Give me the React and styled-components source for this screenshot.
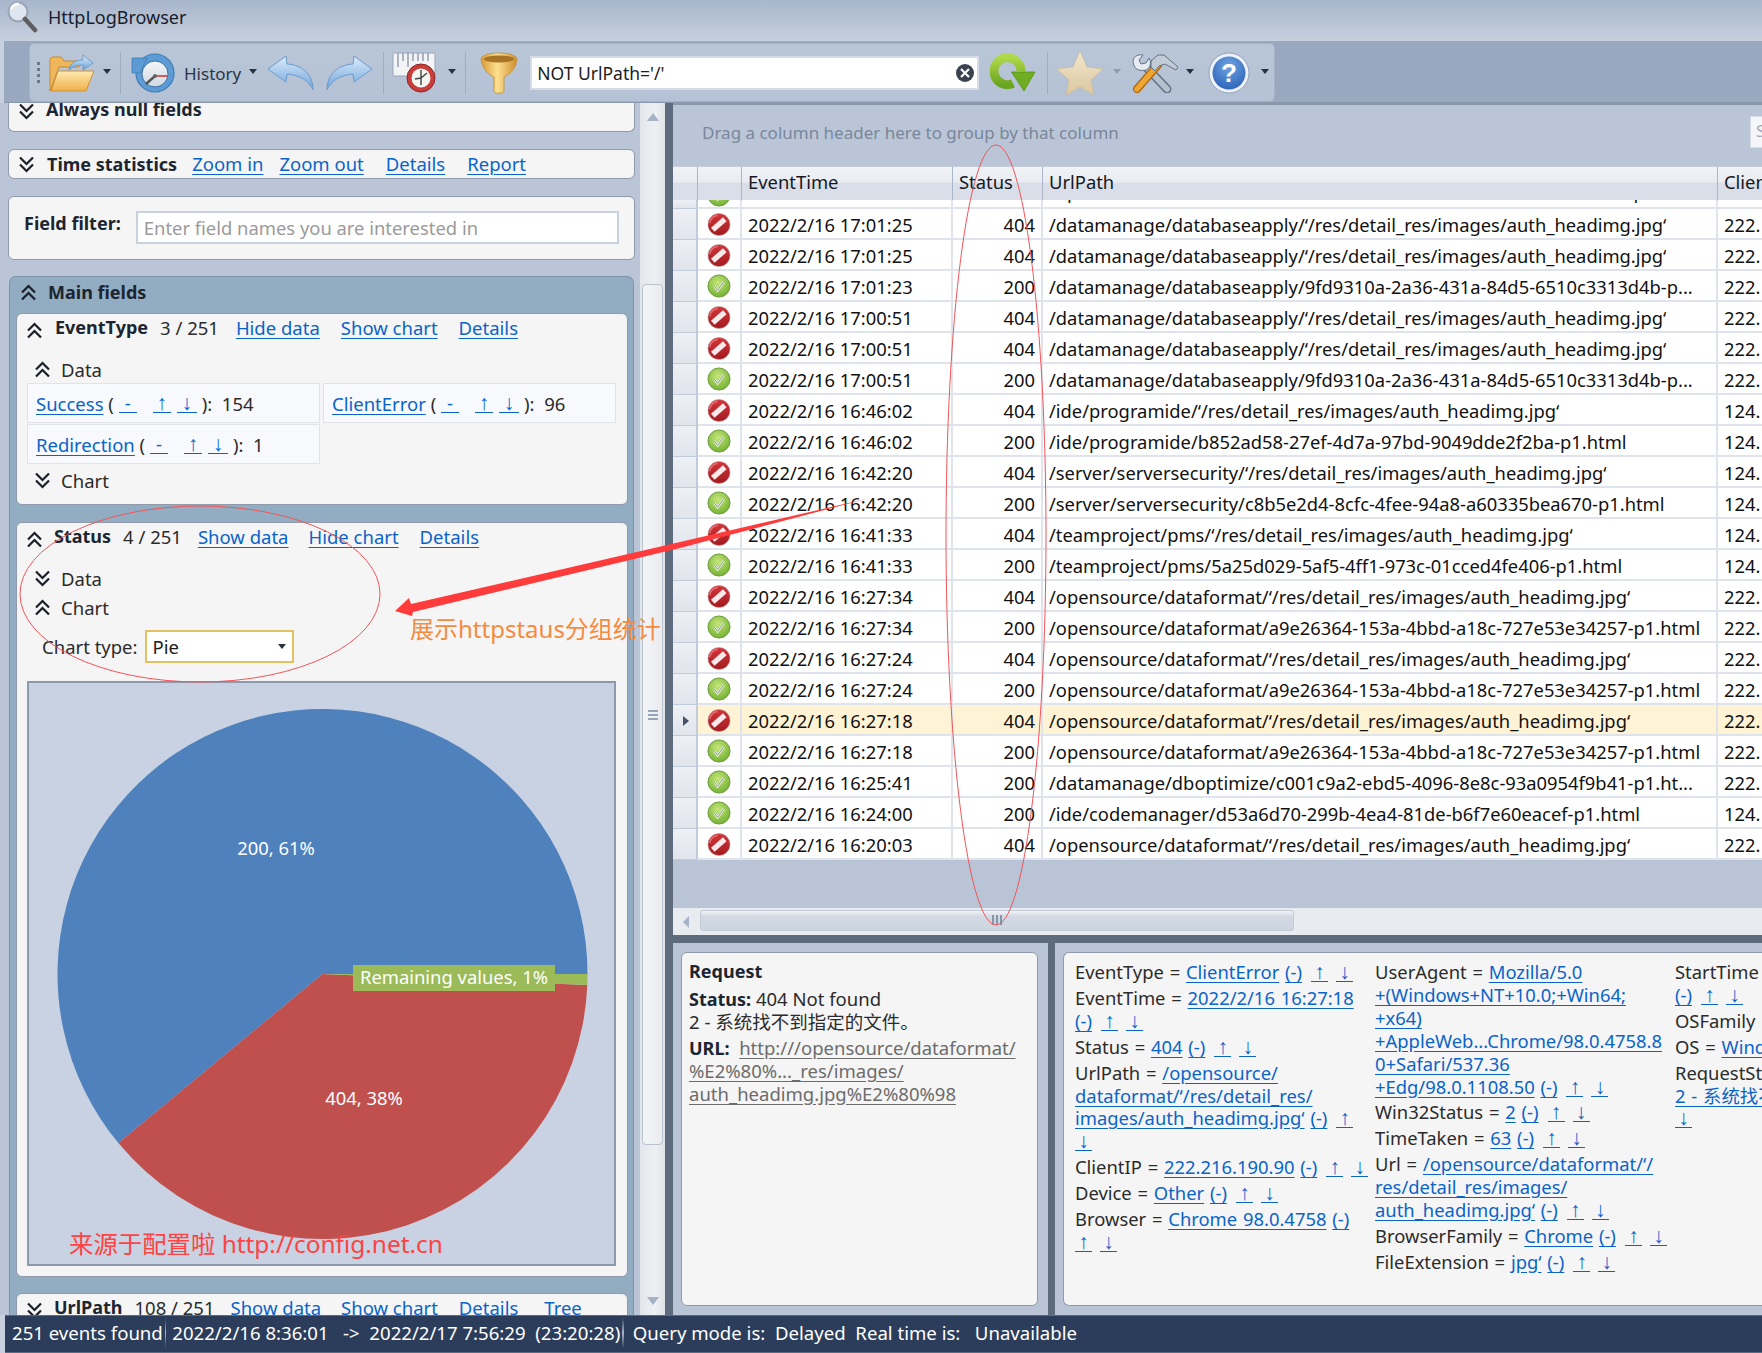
import React from "react";
import styled, { createGlobalStyle } from "styled-components";

const Global = createGlobalStyle`
  html, body { margin: 0; padding: 0; background: #c6d0de; }
  * { box-sizing: border-box; }
  body { font-family: "Noto Sans", "Noto Sans CJK SC", sans-serif; font-size: 18px; color: #1a1a1a; }
`;

const Page = styled.div`
  position: relative; width: 1762px; height: 1353px; overflow: hidden;
  display: flex; flex-direction: column; background: #c6d0de;
`;
const TitleBar = styled.div`
  height: 41px; flex: none; display: flex; align-items: center; padding: 0 0 7px 6px; gap: 10px;
  background: linear-gradient(#a8b6cc, #c6d0de); font-size: 18px; color: #16202c;
`;
const ToolStrip = styled.div`
  height: 62px; flex: none; margin-left: 4px; background: #9aa8bf; padding: 2px 0 1px 25px;
  border-bottom: 1px solid #8a98ae;
`;
const Toolbar = styled.div`
  width: 1246px; height: 59px; display: flex; align-items: center; position: relative;
  background: linear-gradient(#b9c6d8, #b5c2d5); border: 1px solid #a5b2c6; border-radius: 5px;
  color: #2c3542; font-size: 17px;
`;
const Grip = styled.div`
  width: 3px; height: 22px; margin-left: 7px; flex: none;
  background: repeating-linear-gradient(#6d7a8e 0 3px, transparent 3px 6px);
`;
const Sep = styled.div`
  width: 1px; height: 42px; flex: none; background: #9fadc1; margin-left: ${p => p.$ml}px;
`;
const Tool = styled.div`
  flex: none; display: flex; margin-left: ${p => p.$ml}px;
`;
const Caret = styled.div`
  flex: none; width: 0; height: 0; margin-left: ${p => p.$ml}px; margin-top: -3px;
  border-left: 4.5px solid transparent; border-right: 4.5px solid transparent;
  border-top: 5px solid ${p => p.$dim ? "#8f9db2" : "#26303e"};
`;
const HistoryLabel = styled.span` margin-left: ${p => p.$ml}px; flex: none; margin-top: 1px; `;
const FilterBox = styled.div`
  position: relative; flex: none; margin-left: 12px; width: 449px; height: 34px;
  background: #fff; border: 2px solid #d5dce6; display: flex; align-items: center;
`;
const FilterInput = styled.input`
  border: 0; outline: 0; background: transparent; width: 410px; padding: 0 0 0 5px;
  font: inherit; font-size: 17.5px; color: #1c1c1c;
`;
const ClearIcon = styled.svg` position: absolute; right: 2px; top: 5px; `;

const Main = styled.div` flex: 1; min-height: 0; display: flex; `;
const LeftPane = styled.div`
  width: 665px; flex: none; display: flex; overflow: hidden; background: #bac6d8;
`;
const LeftScroll = styled.div`
  width: 640px; flex: none; padding-left: 8px; display: flex; flex-direction: column; height: 1400px;
  font-size: 18.5px;
`;
const Card = styled.div`
  background: #f5f5f5; border: 1.5px solid #8f9aab; border-radius: 6px; flex: none;
`;
const NullCard = styled(Card)`
  width: 627px; height: 29px; border-top: 0; border-radius: 0 0 6px 6px;
  display: flex; align-items: flex-start; padding-left: 9px;
`;
const LinkCard = styled(Card)`
  width: 627px; height: 30px; margin-top: 17px; display: flex; align-items: center; padding-left: 9px;
  & > span { margin-top: -2px; }
`;
const FilterCard = styled(Card)`
  width: 627px; height: 64px; margin-top: 17px; display: flex; align-items: flex-start; padding: 14px 0 0 15px;
`;
const Strong = styled.b`
  font-weight: 700; font-size: 18px; color: #1c2530; margin-left: ${p => p.$ml || 0}px; white-space: pre;
`;
const NullTitle = styled(Strong)` margin-top: -6px; line-height: 24px; margin-left: 11px; `;
const PlainInput = styled.input`
  width: 483px; height: 33px; margin-left: 15px; margin-top: 0; border: 2px solid #c9d1dd; outline: 0;
  background: #fff; padding: 0 6px; font: inherit; font-size: 18.4px; color: #555;
  &::placeholder { color: #9a9a9a; opacity: 1; }
`;
const Section = styled.div`
  margin-top: 16px; margin-left: 1px; width: 625px; background: #92acc2; border: 1px solid #7f92a8; border-bottom: 0;
  border-radius: 7px 7px 0 0; padding: 0 6px; flex: none;
`;
const SectionHead = styled.div`
  height: 36px; display: flex; align-items: center; padding: 0 0 6px 4px; gap: 11px; color: #1c2a3a;
`;
const FieldCard = styled(Card)`
  height: ${p => p.$h}px; margin-bottom: ${p => p.$mb ?? 16}px; width: 612px; overflow: hidden;
`;
const FieldHead = styled.div`
  display: flex; align-items: center; height: 30px; margin-top: -2px; padding-left: 9px;
  white-space: pre;
`;
const HeadChev = styled.span` display: flex; margin-top: 7px; flex: none; `;
const Count = styled.span` margin-left: 12px; color: #2b2b2b; `;
const A = styled.span`
  color: #0a64c8; text-decoration: underline; text-underline-offset: 3px; white-space: pre;
  margin-left: ${p => p.$ml || 0}px;
`;
const Arr = styled.span`
  display: inline-block; width: ${p => p.$w || 17}px; margin-left: ${p => p.$ml || 0}px;
  border-bottom: 1px solid #0a64c8; color: #0a64c8; text-align: center; line-height: 19px;
  font-family: "Liberation Sans", sans-serif; font-size: 21px;
`;
const Dash = styled(Arr)` font-family: inherit; font-size: inherit; `;
const Tail = styled.span` margin-left: 5px; white-space: pre; `;
const Expander = styled.div`
  display: flex; align-items: center; gap: 10px; padding-left: 17px; height: 28px; color: #2b2b2b;
  margin-top: ${p => p.$mt || 0}px;
`;
const CellGrid = styled.div`
  display: grid; grid-template-columns: 293px 293px; gap: 1px 3px; margin: 0 0 0 10px;
`;
const Cell = styled.div`
  height: 40px; background: #f7f9fd; border: 1.5px solid #e1e3e8; display: flex; align-items: center;
  padding-left: 8px; white-space: pre; color: #2b2b2b;
`;
const TypeRow = styled.div`
  display: flex; align-items: center; padding-left: 25px; height: 33px; margin-top: 9px; color: #2b2b2b;
`;
const Select = styled.div`
  width: 149px; height: 33px; margin-left: 7px; background: #fff; border: 2px solid #e3c35f;
  display: flex; align-items: center; justify-content: space-between; padding: 0 6px 0 6px; color: #1c1c1c;
`;
const SelectCaret = styled(Caret)` margin: 0; `;
const ChartBox = styled.div`
  width: 589px; height: 585px; margin: 18px 0 0 10px; background: #c8d2e3; border: 2px solid #8d99ac;
  display: flex; align-items: center;
`;

const VBar = styled.div`
  width: 25px; flex: none; background: linear-gradient(90deg, #e3e6eb, #eef0f3 60%, #e0e3e8);
  display: flex; flex-direction: column; align-items: center;
`;
const Tri = styled.div`
  width: 0; height: 0; flex: none; margin-top: ${p => p.$mt || 0}px;
  border-left: 6px solid transparent; border-right: 6px solid transparent;
  ${p => p.$down ? "border-top: 8px solid #a5b3c7;" : "border-bottom: 8px solid #a5b3c7;"}
`;
const VThumb = styled.div`
  width: 21px; height: 861px; margin-top: 163px; flex: none; border: 1.5px solid #b9c2cf; border-radius: 4px;
  background: linear-gradient(90deg, #f4f5f7, #e9ebef); display: flex; align-items: center; justify-content: center;
`;
const VGrip = styled.div`
  width: 10px; height: 10px; background: repeating-linear-gradient(#97a5b9 0 2px, transparent 2px 4px);
`;
const Splitter = styled.div` width: 8px; flex: none; background: #5d6b7f; `;
const RightPane = styled.div` flex: 1; min-width: 0; display: flex; flex-direction: column; overflow: hidden; `;
const GroupPanel = styled.div`
  height: 63px; flex: none; background: #bac6d7; display: flex; align-items: center; padding: 0 0 7px 29px;
  color: #79879b; font-size: 17px; border-top: 2px solid #8a98ae;
`;
const Hint = styled.div`
  margin-left: auto; margin-right: -44px; width: 56px; height: 32px; flex: none; background: #f4f6f9;
  border: 1.5px solid #d6dde7; color: #a3a9b2; padding-left: 5px; line-height: 28px;
`;
const GridTable = styled.div`
  flex: none; display: grid; grid-template-columns: 25px 44px 211px 90px 675px 60px; background: #dfe3ec;
`;
const HeadCell = styled.div`
  height: 34px; background: linear-gradient(#f0f2f5, #e9ecf1 45%, #d9dee8 50%, #d9dee8);
  border-right: 1.5px solid #a9b5c8; border-top: 1px solid #c3ccd9; display: flex; align-items: center; padding: 0 0 5px 6px;
  font-size: 18.4px; color: #15191f; white-space: pre; overflow: hidden;
`;
const Row = styled.div` display: contents; `;
const CellBase = styled.div`
  height: ${p => p.$short ? 9 : 31}px; border-bottom: 2px solid #dfe3ec; border-right: 2px solid #dfe3ec;
  background: ${p => p.$sel ? "#fff3d6" : "#fff"}; display: flex;
  align-items: ${p => p.$short ? "flex-end" : "center"}; white-space: pre; overflow: hidden;
  font-size: 18.35px; color: #111; padding: ${p => p.$short ? "0 0 3px 6px" : "1px 0 0 6px"};
`;
const Indicator = styled(CellBase)`
  background: linear-gradient(#edf0f4, #e1e5ec); padding-left: 10px; border-right: 2px solid #c2cbd9;
  border-bottom: 1.5px solid #c2cbd9;
`;
const StatusCell = styled(CellBase)` justify-content: flex-end; padding-left: 0; padding-right: 6px; `;
const IconCell = styled(CellBase)` justify-content: center; padding: ${p => p.$short ? "0" : "1px 0 0"}; `;
const SelMark = styled.div`
  width: 0; height: 0; border-top: 5.5px solid transparent; border-bottom: 5.5px solid transparent;
  border-left: 6px solid #46526a;
`;
const GridEmpty = styled.div` flex: 1; background: #b9c5d6; `;
const HBar = styled.div`
  height: 27px; flex: none; background: #e8ebf0; display: flex; align-items: center; padding-left: 10px;
`;
const HTri = styled.div`
  width: 0; height: 0; border-top: 6px solid transparent; border-bottom: 6px solid transparent;
  border-right: 6px solid #a5b3c7;
`;
const HThumb = styled.div`
  width: 594px; height: 21px; margin-left: 11px; margin-top: -3px; border: 1.5px solid #c2cad6; border-radius: 3px;
  background: linear-gradient(#f1f3f6, #d2d9e3 30%, #cdd5e0); display: flex; align-items: center; justify-content: center;
`;
const HGrip = styled.div`
  width: 11px; height: 10px; background: repeating-linear-gradient(90deg, #8795aa 0 2px, transparent 2px 4px);
`;
const DarkBar = styled.div` height: 8px; flex: none; background: #5d6b7f; `;
const Bottom = styled.div`
  height: 372px; flex: none; background: #b9c5d6; display: flex; padding: 9px 0 9px 8px;
`;
const ReqCard = styled(Card)`
  width: 357px; padding: 7px 7px; line-height: 22.8px; color: #2b2b2b; font-size: 18.5px;
`;
const Line = styled.div` white-space: pre; margin-top: ${p => p.$mt || 0}px; `;
const GreyLink = styled.span` color: #6c6c6c; text-decoration: underline; text-underline-offset: 3px; `;
const BSplit = styled.div` width: 7px; flex: none; margin: -9px 8px -9px 10px; background: #5d6b7f; `;
const DetailCard = styled(Card)`
  width: 760px; display: flex; padding: 8px 0 0 11px; border-right: 0; border-radius: 6px 0 0 6px;
  line-height: 22.9px; font-size: 18.4px; color: #2b2b2b; word-spacing: 1px;
`;
const DetailCol = styled.div` width: 300px; flex: none; white-space: pre; `;
const Item = styled.div` margin-bottom: 3px; `;
const StatusBar = styled.div`
  height: 38px; flex: none; margin-left: 5px; padding: 0 0 3px 7px; display: flex; align-items: center;
  background: #2c3d5b; border-top: 1px solid #5a6a82; border-bottom: 1px solid #5a6a82;
  color: #fff; font-size: 18.6px; white-space: pre;
`;
const BarSep = styled.span`
  display: inline-block; width: 1.5px; height: 30px; margin: 0 ${p => p.$mr || 6}px 0 2px; flex: none;
  background: linear-gradient(transparent, #aab6c8 50%, transparent);
`;
const Overlay = styled.svg` position: absolute; left: 0; top: 0; pointer-events: none; `;
const NoteOrange = styled.div`
  position: absolute; left: 410px; top: 611px; font-size: 24px; line-height: 36px; color: #f58b40; white-space: pre;
`;
const NoteRed = styled.div`
  position: absolute; left: 69px; top: 1225px; font-size: 24.4px; line-height: 38px; color: #ff4242; white-space: pre;
`;
const Defs = styled.svg` position: absolute; width: 0; height: 0; `;

const Chev = ({ up, size = 17 }) => (
  <svg width={size} height={size} viewBox="0 0 17 17" fill="none" stroke="#1a1f28" strokeWidth="2.2" style={{ flex: "none" }}>
    {up ? <path d="M2 8.5 8.5 2 15 8.5M2 15.5 8.5 9 15 15.5" /> : <path d="M2 1.5 8.5 8 15 1.5M2 8.5 8.5 15 15 8.5" />}
  </svg>
);

const Ok = () => (
  <svg width="24" height="24" viewBox="0 0 25 25" style={{ flex: "none" }}>
    <circle cx="12.5" cy="12.5" r="11.5" fill="url(#gOk)" stroke="#6a9a3a" strokeWidth="1" />
    <path d="M7.5 12.5l3.5 4.5 6.5-9" fill="none" stroke="#e7efe0" strokeWidth="2.6" />
    <path d="M7.5 12.5l3.5 4.5 6.5-9" fill="none" stroke="#7f9a77" strokeWidth="1" />
  </svg>
);
const Bad = () => (
  <svg width="24" height="25" viewBox="0 0 25 25" style={{ flex: "none" }}>
    <circle cx="12.5" cy="12.5" r="11.5" fill="url(#gBad)" stroke="#b8a5a5" strokeWidth=".6" />
    <path d="M6 18 18.5 7" stroke="#f7e9e9" strokeWidth="5.6" />
    <path d="M3 11A9.5 9.5 0 0 1 11 3" stroke="#e9686c" strokeWidth="1.6" fill="none" />
  </svg>
);

const AppIcon = () => (
  <svg width="32" height="32" viewBox="0 0 32 32" style={{ flex: "none", marginTop: -1 }}>
    <circle cx="12" cy="11" r="9.5" fill="#dfe6ef" stroke="#9aa5b3" strokeWidth="2" />
    <path d="M5 8a8 8 0 0 1 8-5" stroke="#fff" strokeWidth="2.5" fill="none" />
    <path d="M19 18l10 11" stroke="#5f5f5f" strokeWidth="4.5" strokeLinecap="round" />
  </svg>
);
const Folder = () => (
  <svg width="46" height="38" viewBox="0 0 46 38">
    <path d="M1 37V5l2-2h9l3 4h13l2 6H10z" fill="#efb65a" stroke="#c58a34" strokeWidth="1" />
    <path d="M2 37 9 17h36l-8 20z" fill="url(#gFolder)" stroke="#cf9136" strokeWidth="1" />
    <path d="M20 16c1-7 6-10 14-10V1l10 8-10 7v-5c-5 0-10 1-14 5z" fill="url(#gArrow)" stroke="#5f90c4" strokeWidth=".8" />
  </svg>
);
const HistoryIcon = () => (
  <svg width="44" height="42" viewBox="0 0 44 42">
    <circle cx="24" cy="21" r="19" fill="#5c9bd3" stroke="#3f7db5" strokeWidth="1.2" />
    <circle cx="24" cy="22" r="13" fill="url(#gFace)" stroke="#3a6fa3" strokeWidth="1" />
    <path d="M24 24 36 24" stroke="#d23b3b" strokeWidth="1.6" />
    <path d="M24 24 15 32" stroke="#555" strokeWidth="2.4" />
    <circle cx="24" cy="24" r="2" fill="#666" />
    <path d="M1 6 16 6 9 21 1 21z" fill="#5c9bd3" stroke="#3f7db5" strokeWidth=".8" />
  </svg>
);
const ArrowL = ({ flip }) => (
  <svg width="47" height="36" viewBox="0 0 47 36" style={flip ? { transform: "scaleX(-1)" } : undefined}>
    <path d="M1 14 19 1l1 8c14 1 26 9 26 26-4-9-13-15-26-16l-1 8z" fill="url(#gArrow)" stroke="#6b9bcc" strokeWidth="1" />
  </svg>
);
const Timer = () => (
  <svg width="47" height="41" viewBox="0 0 47 41">
    <rect x="1" y="1" width="42" height="23" rx="1" fill="#f2f4f7" stroke="#9aa5b3" />
    <path d="M6 1v14M11 1v8M16 1v14M21 1v8M26 1v8M31 1v8M36 1v8" stroke="#8f9aa8" strokeWidth="1.4" />
    <circle cx="29" cy="26" r="14" fill="#c93d3d" stroke="#8f2424" />
    <circle cx="29" cy="26" r="9.5" fill="#f5f5f0" />
    <path d="M29 18v8l6-5M29 26v7M29 26l-6 1" stroke="#444" strokeWidth="1.4" fill="none" />
  </svg>
);
const Funnel = () => (
  <svg width="38" height="42" viewBox="0 0 38 42">
    <path d="M1 7c1-8 35-8 36 0-1 10-8 16-13 18v14c0 3-10 3-10 0V25C9 23 2 17 1 7z" fill="url(#gFunnel)" stroke="#c08f35" strokeWidth=".8" />
    <ellipse cx="19" cy="7" rx="15" ry="3.6" fill="#a87425" />
  </svg>
);
const Refresh = () => (
  <svg width="46" height="41" viewBox="0 0 46 41">
    <path d="M23 31.5A13.5 13.5 0 1 1 31 19" fill="none" stroke="url(#gGreen)" strokeWidth="9" />
    <path d="M21.5 20H45L34 39z" fill="#6fae22" stroke="#5b8f14" strokeWidth=".8" />
  </svg>
);
const Star = () => (
  <svg width="48" height="46" viewBox="0 0 48 46">
    <path d="M24 1l7 16 16 2-12 11 3 15-14-8-14 8 3-15L1 19l16-2z" fill="url(#gStar)" stroke="#cdbd99" strokeWidth=".8" />
  </svg>
);
const Tools = () => (
  <svg width="47" height="40" viewBox="0 0 47 40">
    <path d="M17 16 36 36" stroke="#5f7286" strokeWidth="9" strokeLinecap="round" />
    <path d="M17 16 36 36" stroke="#b5c1ce" strokeWidth="6" strokeLinecap="round" />
    <path d="M2 9C2 4 6 1 12 2L8 7l2 4 5-1 3-5c3 5 1 10-3 12-4 1-12 1-13-8z" fill="#e6ebf1" stroke="#5f7286" />
    <path d="M6 36 27 12" stroke="#a96a14" strokeWidth="8" strokeLinecap="round" />
    <path d="M6 36 27 12" stroke="#f0a533" strokeWidth="5.5" strokeLinecap="round" />
    <path d="M20 8l7-6h6l14 12-2 3-11-6-6 2-4 5-4-4z" fill="#c3ccd6" stroke="#5f7286" />
  </svg>
);
const Help = () => (
  <svg width="42" height="42" viewBox="0 0 42 42">
    <circle cx="21" cy="21" r="20" fill="#eef2f8" stroke="#8ea2bf" />
    <circle cx="21" cy="21" r="16.5" fill="url(#gHelp)" />
    <text x="21" y="30" textAnchor="middle" fontSize="26" fontWeight="700" fill="#fff" fontFamily="Liberation Sans">?</text>
  </svg>
);

const Pie = () => (
  <svg width="585" height="579" viewBox="0 0 585 579">
    <path d="M293.5 290H558.5A265 265 0 1 0 89.4 459Z" fill="#4f81bd" />
    <path d="M293.5 290 89.4 459A265 265 0 0 0 558.3 301Z" fill="#c0504d" />
    <path d="M293.5 290 558.3 301A265 265 0 0 0 558.5 290Z" fill="#9bbb59" />
    <rect x="324" y="281" width="202" height="26" fill="#9bbb59" />
    <g fill="#fff" fontSize="18.4" textAnchor="middle" fontFamily="Noto Sans, sans-serif">
      <text x="247" y="171">200, 61%</text>
      <text x="335" y="421">404, 38%</text>
      <text x="425" y="300">Remaining values, 1%</text>
    </g>
  </svg>
);

const deny = "‘/res/detail_res/images/auth_headimg.jpg‘";
const rows = [
  ["2022/2/16 17:01:25", 404, "/datamanage/databaseapply/" + deny, "222."],
  ["2022/2/16 17:01:25", 404, "/datamanage/databaseapply/" + deny, "222."],
  ["2022/2/16 17:01:23", 200, "/datamanage/databaseapply/9fd9310a-2a36-431a-84d5-6510c3313d4b-p...", "222."],
  ["2022/2/16 17:00:51", 404, "/datamanage/databaseapply/" + deny, "222."],
  ["2022/2/16 17:00:51", 404, "/datamanage/databaseapply/" + deny, "222."],
  ["2022/2/16 17:00:51", 200, "/datamanage/databaseapply/9fd9310a-2a36-431a-84d5-6510c3313d4b-p...", "222."],
  ["2022/2/16 16:46:02", 404, "/ide/programide/" + deny, "124."],
  ["2022/2/16 16:46:02", 200, "/ide/programide/b852ad58-27ef-4d7a-97bd-9049dde2f2ba-p1.html", "124."],
  ["2022/2/16 16:42:20", 404, "/server/serversecurity/" + deny, "124."],
  ["2022/2/16 16:42:20", 200, "/server/serversecurity/c8b5e2d4-8cfc-4fee-94a8-a60335bea670-p1.html", "124."],
  ["2022/2/16 16:41:33", 404, "/teamproject/pms/" + deny, "124."],
  ["2022/2/16 16:41:33", 200, "/teamproject/pms/5a25d029-5af5-4ff1-973c-01cced4fe406-p1.html", "124."],
  ["2022/2/16 16:27:34", 404, "/opensource/dataformat/" + deny, "222."],
  ["2022/2/16 16:27:34", 200, "/opensource/dataformat/a9e26364-153a-4bbd-a18c-727e53e34257-p1.html", "222."],
  ["2022/2/16 16:27:24", 404, "/opensource/dataformat/" + deny, "222."],
  ["2022/2/16 16:27:24", 200, "/opensource/dataformat/a9e26364-153a-4bbd-a18c-727e53e34257-p1.html", "222."],
  ["2022/2/16 16:27:18", 404, "/opensource/dataformat/" + deny, "222.", true],
  ["2022/2/16 16:27:18", 200, "/opensource/dataformat/a9e26364-153a-4bbd-a18c-727e53e34257-p1.html", "222."],
  ["2022/2/16 16:25:41", 200, "/datamanage/dboptimize/c001c9a2-ebd5-4096-8e8c-93a0954f9b41-p1.ht...", "222."],
  ["2022/2/16 16:24:00", 200, "/ide/codemanager/d53a6d70-299b-4ea4-81de-b6f7e60eacef-p1.html", "124."],
  ["2022/2/16 16:20:03", 404, "/opensource/dataformat/" + deny, "222."],
];

const Up = ({ ml = 9, w }) => <Arr $ml={ml} $w={w}>↑</Arr>;
const Down = ({ ml = 8, w }) => <Arr $ml={ml} $w={w}>↓</Arr>;
const Arrows = () => (<><A>(-)</A><Up /><Down /></>);
const CellLinks = () => (<><Dash $w={18}>-</Dash><Up ml={16} w={18} /><Down ml={6} w={20} /></>);

const Detail = ({ name, children }) => (
  <Item>{name} = {children}</Item>
);

export default function App() {
  return (
    <Page>
      <Global />
      <Defs>
        <defs>
          <radialGradient id="gOk" cx="45%" cy="35%" r="70%"><stop offset="0" stopColor="#c6e67a" /><stop offset="1" stopColor="#6fae2f" /></radialGradient>
          <linearGradient id="gBad" x1="0" y1="0" x2="0" y2="1"><stop offset="0" stopColor="#d2363b" /><stop offset="1" stopColor="#a31a1f" /></linearGradient>
          <linearGradient id="gFolder" x1="0" y1="0" x2="0" y2="1"><stop offset="0" stopColor="#fdeab0" /><stop offset="1" stopColor="#f0b04a" /></linearGradient>
          <linearGradient id="gArrow" x1="0" y1="0" x2="0" y2="1"><stop offset="0" stopColor="#dcecfb" /><stop offset="1" stopColor="#6ea3d8" /></linearGradient>
          <linearGradient id="gFace" x1="0" y1="0" x2="0" y2="1"><stop offset="0" stopColor="#f5f7fa" /><stop offset="1" stopColor="#cfd8e2" /></linearGradient>
          <linearGradient id="gFunnel" x1="0" y1="0" x2="1" y2="0"><stop offset="0" stopColor="#d69a35" /><stop offset=".45" stopColor="#fde090" /><stop offset="1" stopColor="#cf8f2c" /></linearGradient>
          <linearGradient id="gGreen" x1="0" y1="0" x2="0" y2="1"><stop offset="0" stopColor="#b0d84a" /><stop offset="1" stopColor="#6aa51f" /></linearGradient>
          <linearGradient id="gStar" x1="0" y1="0" x2="0" y2="1"><stop offset="0" stopColor="#f1e6cc" /><stop offset="1" stopColor="#dcc8a0" /></linearGradient>
          <radialGradient id="gHelp" cx="50%" cy="30%" r="75%"><stop offset="0" stopColor="#6fa3e0" /><stop offset="1" stopColor="#2a62b8" /></radialGradient>
        </defs>
      </Defs>
      <TitleBar><AppIcon />HttpLogBrowser</TitleBar>
      <ToolStrip>
        <Toolbar>
          <Grip />
          <Tool $ml={9}><Folder /></Tool>
          <Caret $ml={8} />
          <Sep $ml={9} />
          <Tool $ml={10}><HistoryIcon /></Tool>
          <HistoryLabel $ml={9}>History</HistoryLabel>
          <Caret $ml={8} />
          <Tool $ml={10}><ArrowL /></Tool>
          <Tool $ml={12}><ArrowL flip /></Tool>
          <Sep $ml={10} />
          <Tool $ml={8}><Timer /></Tool>
          <Caret $ml={9} />
          <Sep $ml={9} />
          <Tool $ml={14}><Funnel /></Tool>
          <FilterBox>
            <FilterInput readOnly value="NOT UrlPath='/'" />
            <ClearIcon width="20" height="20" viewBox="0 0 20 20">
              <circle cx="10" cy="10" r="9" fill="#39424e" />
              <path d="M6 6l8 8M14 6l-8 8" stroke="#fff" strokeWidth="2.2" />
            </ClearIcon>
          </FilterBox>
          <Tool $ml={11}><Refresh /></Tool>
          <Sep $ml={11} />
          <Tool $ml={8}><Star /></Tool>
          <Caret $ml={9} $dim />
          <Tool $ml={10}><Tools /></Tool>
          <Caret $ml={8} />
          <Tool $ml={14}><Help /></Tool>
          <Caret $ml={11} />
        </Toolbar>
      </ToolStrip>
      <Main>
        <LeftPane>
          <LeftScroll>
            <NullCard><Chev /><NullTitle>Always null fields</NullTitle></NullCard>
            <LinkCard>
              <Chev /><Strong $ml={12}>Time statistics</Strong>
              <A $ml={15}>Zoom in</A><A $ml={16}>Zoom out</A><A $ml={22}>Details</A><A $ml={22}>Report</A>
            </LinkCard>
            <FilterCard>
              <Strong>Field filter:</Strong>
              <PlainInput readOnly placeholder="Enter field names you are interested in" />
            </FilterCard>
            <Section>
              <SectionHead><Chev up /><Strong>Main fields</Strong></SectionHead>
              <FieldCard $h={192} $mb={17}>
                <FieldHead>
                  <HeadChev><Chev up /></HeadChev><Strong $ml={12}>EventType</Strong><Count>3 / 251</Count>
                  <A $ml={17}>Hide data</A><A $ml={21}>Show chart</A><A $ml={21}>Details</A>
                </FieldHead>
                <Expander $mt={13}><Chev up />Data</Expander>
                <CellGrid>
                  <Cell><A>Success</A> ( <CellLinks /><Tail>):  154</Tail></Cell>
                  <Cell><A>ClientError</A> ( <CellLinks /><Tail>):  96</Tail></Cell>
                  <Cell><A>Redirection</A> ( <CellLinks /><Tail>):  1</Tail></Cell>
                </CellGrid>
                <Expander $mt={2}><Chev />Chart</Expander>
              </FieldCard>
              <FieldCard $h={755}>
                <FieldHead>
                  <HeadChev><Chev up /></HeadChev><Strong $ml={11}>Status</Strong><Count>4 / 251</Count>
                  <A $ml={16}>Show data</A><A $ml={20}>Hide chart</A><A $ml={21}>Details</A>
                </FieldHead>
                <Expander $mt={13}><Chev />Data</Expander>
                <Expander $mt={1}><Chev up />Chart</Expander>
                <TypeRow>Chart type:<Select>Pie<SelectCaret /></Select></TypeRow>
                <ChartBox><Pie /></ChartBox>
              </FieldCard>
              <FieldCard $h={60} $mb={0}>
                <FieldHead>
                  <HeadChev><Chev /></HeadChev><Strong $ml={11}>UrlPath</Strong><Count>108 / 251</Count>
                  <A $ml={16}>Show data</A><A $ml={20}>Show chart</A><A $ml={21}>Details</A><A $ml={26}>Tree</A>
                </FieldHead>
              </FieldCard>
            </Section>
          </LeftScroll>
          <VBar>
            <Tri $mt={10} />
            <VThumb><VGrip /></VThumb>
            <Tri $down $mt={152} />
          </VBar>
        </LeftPane>
        <Splitter />
        <RightPane>
          <GroupPanel>
            Drag a column header here to group by that column
            <Hint>S</Hint>
          </GroupPanel>
          <GridTable>
            <HeadCell /><HeadCell /><HeadCell>EventTime</HeadCell><HeadCell>Status</HeadCell><HeadCell>UrlPath</HeadCell><HeadCell>Client</HeadCell>
            <Row>
              <Indicator $short /><IconCell $short><Ok /></IconCell>
              <CellBase $short>2022/2/16 17:01:26</CellBase><StatusCell $short>200</StatusCell>
              <CellBase $short>/opensource/dataformat/a9e26364-153a-4bbd-a18c-727e53e34257-p1.html</CellBase><CellBase $short>222.</CellBase>
            </Row>
            {rows.map((r, i) => (
              <Row key={i}>
                <Indicator>{r[4] && <SelMark />}</Indicator>
                <IconCell $sel={r[4]}>{r[1] === 404 ? <Bad /> : <Ok />}</IconCell>
                <CellBase $sel={r[4]}>{r[0]}</CellBase>
                <StatusCell $sel={r[4]}>{r[1]}</StatusCell>
                <CellBase $sel={r[4]}>{r[2]}</CellBase>
                <CellBase $sel={r[4]}>{r[3]}</CellBase>
              </Row>
            ))}
          </GridTable>
          <GridEmpty />
          <HBar><HTri /><HThumb><HGrip /></HThumb></HBar>
          <DarkBar />
          <Bottom>
            <ReqCard>
              <Line><Strong>Request</Strong></Line>
              <Line $mt={5}><Strong>Status:</Strong> 404 Not found</Line>
              <Line>2 - 系统找不到指定的文件。</Line>
              <Line $mt={4}><Strong>URL:</Strong>  <GreyLink>http:///opensource/dataformat/</GreyLink></Line>
              <Line><GreyLink>%E2%80%..._res/images/</GreyLink></Line>
              <Line><GreyLink>auth_headimg.jpg%E2%80%98</GreyLink></Line>
            </ReqCard>
            <BSplit />
            <DetailCard>
              <DetailCol>
                <Detail name="EventType"><A>ClientError</A> <Arrows /></Detail>
                <Item>EventTime = <A>2022/2/16 16:27:18</A><br /><Arrows /></Item>
                <Detail name="Status"><A>404</A> <Arrows /></Detail>
                <Item>UrlPath = <A>/opensource/</A><br /><A>dataformat/‘/res/detail_res/</A><br /><A>images/auth_headimg.jpg‘</A> <A>(-)</A><Up /><br /><Down ml={0} /></Item>
                <Detail name="ClientIP"><A>222.216.190.90</A> <Arrows /></Detail>
                <Detail name="Device"><A>Other</A> <Arrows /></Detail>
                <Item>Browser = <A>Chrome 98.0.4758</A> <A>(-)</A><br /><Up ml={0} /><Down /></Item>
              </DetailCol>
              <DetailCol>
                <Item>UserAgent = <A>Mozilla/5.0</A><br /><A>+(Windows+NT+10.0;+Win64;</A><br /><A>+x64)</A><br /><A>+AppleWeb...Chrome/98.0.4758.8</A><br /><A>0+Safari/537.36</A><br /><A>+Edg/98.0.1108.50</A> <Arrows /></Item>
                <Detail name="Win32Status"><A>2</A> <Arrows /></Detail>
                <Detail name="TimeTaken"><A>63</A> <Arrows /></Detail>
                <Item>Url = <A>/opensource/dataformat/‘/</A><br /><A>res/detail_res/images/</A><br /><A>auth_headimg.jpg‘</A> <Arrows /></Item>
                <Detail name="BrowserFamily"><A>Chrome</A> <Arrows /></Detail>
                <Detail name="FileExtension"><A>jpg‘</A> <Arrows /></Detail>
              </DetailCol>
              <DetailCol>
                <Item>StartTime<br /><Arrows /></Item>
                <Item>OSFamily</Item>
                <Detail name="OS"><A>Windows</A></Detail>
                <Item>RequestStatus<br /><A>2 - 系统找不到</A><br /><Down ml={0} /></Item>
              </DetailCol>
            </DetailCard>
          </Bottom>
        </RightPane>
      </Main>
      <StatusBar>
        251 events found<BarSep />2022/2/16 8:36:01   -&gt;  2022/2/17 7:56:29  (23:20:28)<BarSep $mr={9} />Query mode is:  Delayed  Real time is:   Unavailable
      </StatusBar>
      <Overlay width="1762" height="1353" viewBox="0 0 1762 1353" fill="none">
        <ellipse cx="200" cy="594" rx="180" ry="88" stroke="#f0555a" strokeWidth="1" />
        <ellipse cx="996" cy="535" rx="50" ry="390" stroke="#f0555a" strokeWidth="1" />
        <path d="M395 611 409 598 411 604 680 542 870 498 680 548 413 612 412 616Z" fill="#ff3b3b" />
      </Overlay>
      <NoteOrange>展示httpstaus分组统计</NoteOrange>
      <NoteRed>来源于配置啦 http://config.net.cn</NoteRed>
    </Page>
  );
}
